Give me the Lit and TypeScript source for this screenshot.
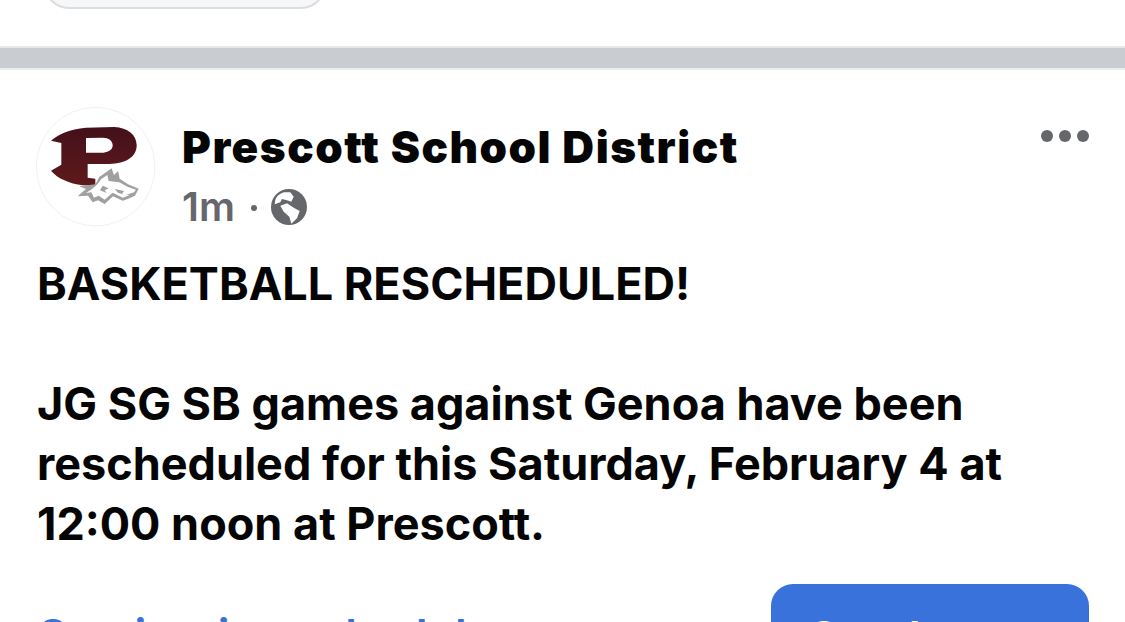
import { LitElement, html, css } from "lit";
import { customElement } from "lit/decorators.js";

@customElement("app-root")
export class AppRoot extends LitElement {
  static styles = css`
    :host { display: block; width: 1125px; height: 622px; overflow: hidden; background: #fff; font-family: Inter, "Liberation Sans", sans-serif; color: #050505; }
    .pill { box-sizing: border-box; width: 282px; height: 50px; margin: -41px 0 0 44px; background: #f6f7f9; border: 2px solid #dcdde1; border-radius: 26px; }
    .band { margin-top: 37px; height: 20px; background: #c9ccd1; border-top: 2px solid #e6e7ea; border-bottom: 2px solid #eceded; }
    .head { display: flex; padding: 37px 36px 0 36px; }
    .avatar { width: 120px; height: 120px; flex: none; display: block; }
    .who { flex: 1; margin-left: 26px; }
    .name { font-size: 44px; line-height: 50px; font-weight: 900; margin-top: 15px; letter-spacing: 1.5px; white-space: nowrap; }
    .meta { display: flex; align-items: center; color: #65676b; font-size: 40px; line-height: 44px; font-weight: 600; margin-top: 13px; }
    .dot { width: 6px; height: 6px; border-radius: 50%; background: #65676b; margin: 2px 14px 0 16px; }
    .globe { width: 36px; height: 36px; display: block; }
    .more { display: flex; gap: 6px; margin-top: 23px; height: 12px; }
    .more i { width: 12px; height: 12px; border-radius: 50%; background: #65676b; }
    .post { margin: 25px 36px 0 37px; font-size: 45px; line-height: 60px; font-weight: 700; }
    .foot { display: flex; justify-content: space-between; margin: 30px 36px 0 38px; }
    .link { color: #3a72dc; font-size: 45px; line-height: 60px; font-weight: 600; margin-top: 22px; white-space: nowrap; }
    .btn { box-sizing: border-box; width: 318px; height: 90px; background: #3a72dc; border-radius: 22px; color: #fff; font-size: 45px; line-height: 60px; font-weight: 600; padding: 24px 0 0 38px; }
  `;

  render() {
    return html`
      <div class="pill"></div>
      <div class="band"></div>
      <div class="head">
        <svg class="avatar" viewBox="50 35 360 360">
          <defs><linearGradient id="p" x1="0" y1="0" x2="0" y2="1"><stop offset="0" stop-color="#44101a"/><stop offset="1" stop-color="#5e1a1c"/></linearGradient></defs>
          <circle cx="229" cy="214" r="178" fill="#fff" stroke="#e9e9e9" stroke-width="2"/>
          <path fill="url(#p)" fill-rule="evenodd" d="M95 136 C120 115 150 102 200 97 L285 95 C325 97 352 118 352 150 C352 185 320 205 270 206 L205 206 L205 247 L228 250 L228 271 L190 270 C150 264 115 250 95 226 L126 208 L126 143 Z M200 128 L200 172 L252 172 C270 170 280 162 280 150 C280 136 268 127 250 127 Z"/>
          <g transform="translate(150 195)">
            <path fill="#a0a0a0" d="M78 72 L90 50 L127 24 L134 44 L146 32 L151 55 L176 72 L208 85 L197 106 L175 116 L160 121 L131 108 L106 131 L86 120 L70 126 L56 106 L25 108 L50 86 L30 78 Z"/>
            <path fill="#fff" d="M84 72 L96 56 L114 44 L118 62 L150 66 L176 80 L200 88 L190 100 L172 108 L160 112 L130 97 L106 118 L88 106 L74 112 L66 96 L50 98 L68 86 Z"/>
            <path fill="#a0a0a0" d="M136 86 L164 92 L158 101 L146 97 Z M170 104 L194 96 L188 104 Z M100 76 L118 84 L106 90 L112 98 L92 90 Z"/>
          </g>
        </svg>
        <div class="who">
          <div class="name">Prescott School District</div>
          <div class="meta">
            <span>1m</span><span class="dot"></span>
            <svg class="globe" viewBox="0 0 36 36">
              <circle cx="18" cy="18" r="18" fill="#65676b"/>
              <path fill="#fff" d="M12.7 3.3 C8 5 5 8 4.3 11 L3.7 15.3 L9.3 13.3 L11 10 L15 11 L20.3 12.7 L22.7 7.7 L19.3 3.3 Z M9.3 16.7 L16 14.3 L22.7 18.7 L28.7 22 L26 29.3 L20.3 34.7 L18.3 27.7 L12.7 22.7 Z"/>
            </svg>
          </div>
        </div>
        <div class="more"><i></i><i></i><i></i></div>
      </div>
      <div class="post">BASKETBALL RESCHEDULED!<br /><br />JG SG SB games against Genoa have been rescheduled for this Saturday, February 4 at 12:00 noon at Prescott.</div>
      <div class="foot">
        <div class="link">Seminarian schedule</div>
        <div class="btn">Send</div>
      </div>
    `;
  }
}
